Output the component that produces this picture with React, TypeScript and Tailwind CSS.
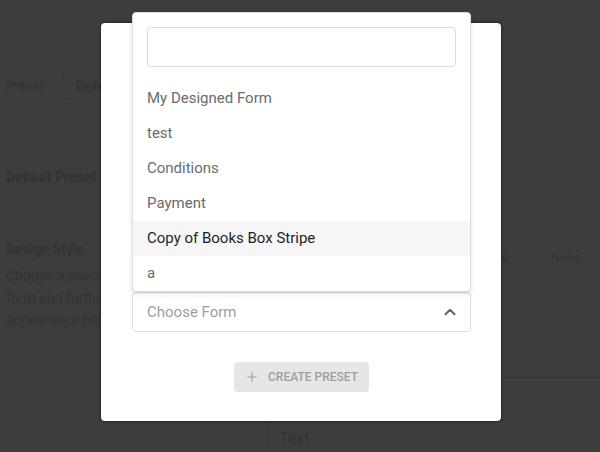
import { ChevronUp, Plus, X } from 'lucide-react';

const forms = ['My Designed Form', 'test', 'Conditions', 'Payment', 'Copy of Books Box Stripe', 'a'];

const PageBehind = () => {
  return (
    <div className="text-[#333333]">
      <div className="flex items-center gap-[19px] px-[6px] pt-[72px]">
        <span className="text-[13px] font-medium">Preset</span>
        <div className="h-[28px] w-[140px] rounded-[3px] border border-[#393939] px-[12px] text-[14px] font-medium leading-[26px]">
          Default
        </div>
      </div>

      <div className="mt-[67px] px-[6px] text-[14px] font-bold leading-[20px]">Default Preset</div>

      <div className="mt-[52px] flex">
        <div className="w-[268px] px-[6px]">
          <div className="text-[14px] font-semibold leading-[20px]">Design Style</div>
          <p className="mt-[6px] w-[230px] text-[14px] leading-[22px]">
            Choose a pre-made style for your form and further customize its appearance below.
          </p>
        </div>
        <div className="flex-1">
          <div className="flex h-[100px] justify-end gap-[42px] pr-[19px] pt-[9px] text-[13px] leading-[20px]">
            <span>Minimal</span>
            <span>None</span>
          </div>
          <div className="h-[38px] border-t border-[#363636]" />
          <div className="h-[43px] border-t border-[#363636]" />
          <div className="border-t border-[#363636] pt-[1px]">
            <div className="h-[40px] border-l border-[#363636] px-[10px] pt-[6px] text-[16px] leading-[22px]">Text</div>
          </div>
        </div>
      </div>
    </div>
  );
};

const FormDropdown = () => {
  return (
    <div className="absolute bottom-full left-0 right-0 rounded-[4px] border border-[#dedede] bg-white shadow-[0_2px_5px_rgba(0,0,0,0.12)]">
      <div className="px-[14px] pt-[14px]">
        <input className="block h-[40px] w-full rounded-[4px] border border-[#dcdcdc] px-[12px] text-[15px] outline-none" />
      </div>
      <ul className="mt-[14px]">
        {forms.map((name) => {
          const active = name === 'Copy of Books Box Stripe';
          return (
            <li
              key={name}
              className={`flex h-[35px] items-center px-[14px] text-[15px] ${
                active ? 'bg-[#f6f6f6] text-[#1f1f1f]' : 'text-[#6b6b6b]'
              }`}
            >
              {name}
            </li>
          );
        })}
      </ul>
    </div>
  );
};

export default function App() {
  return (
    <div className="relative h-[452px] w-[600px] overflow-hidden bg-[#3d3d3d] font-['Roboto',sans-serif]">
      <PageBehind />

      {/* modal */}
      <div className="absolute inset-0 flex justify-center pl-[2px] pt-[23px]">
        <div className="h-[398px] w-[400px] rounded-[4px] bg-white pl-[31px] pr-[30px] shadow-[0_0_3px_rgba(0,0,0,0.7)]">
          <div className="flex items-start justify-between pt-[27px]">
            <h2 className="text-[18px] font-medium text-[#333]">Create New Preset</h2>
            <X size={14} strokeWidth={1.5} className="-mr-[2px] text-[#9a9a9a]" />
          </div>

          <div className="relative mt-[215px]">
            <FormDropdown />
            <div className="flex h-[40px] items-center justify-between rounded-[4px] border border-[#dedede] pl-[14px] pr-[11px]">
              <span className="text-[15px] text-[#9e9e9e]">Choose Form</span>
              <ChevronUp size={18} strokeWidth={2.8} className="text-[#666]" />
            </div>
          </div>

          <button className="mx-auto mt-[30px] flex h-[30px] w-[135px] items-center justify-center gap-[9px] rounded-[4px] bg-[#e6e6e6] text-[12px] font-medium text-[#9e9e9e]">
            <Plus size={14} strokeWidth={2} />
            CREATE PRESET
          </button>
        </div>
      </div>
    </div>
  );
}
